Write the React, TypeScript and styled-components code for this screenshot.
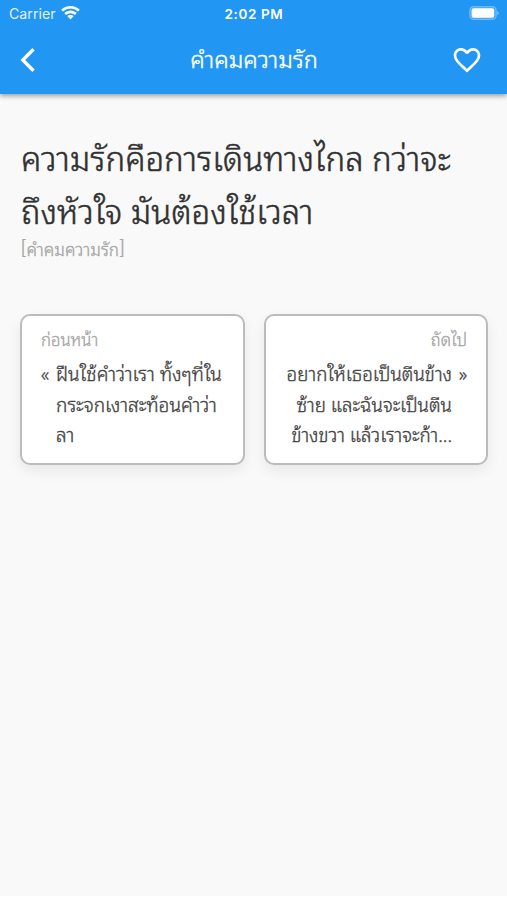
import React from "react";
import styled, { createGlobalStyle } from "styled-components";

const GlobalStyle = createGlobalStyle`
  * { box-sizing: border-box; }
  body { margin: 0; background: #fff; }
`;

const Screen = styled.div`
  width: 100%;
  max-width: 507px;
  height: 900px;
  padding-bottom: 4px;
  display: flex;
  flex-direction: column;
  font-family: "Noto Sans Thai Looped", Sarabun, "Liberation Sans", sans-serif;
  font-weight: 300;
  color: #333;
  overflow: hidden;
`;

const Header = styled.header`
  flex: none;
  height: 94px;
  background: #2196f3;
  color: #fff;
  box-shadow: 0 2px 5px rgba(0, 0, 0, 0.38);
  z-index: 1;
`;

const StatusBar = styled.div`
  height: 27px;
  padding: 0 8px 0 9px;
  display: grid;
  grid-template-columns: 1fr auto 1fr;
  align-items: center;
  font-family: Inter, sans-serif;
  font-size: 13.5px;
`;

const Carrier = styled.div`
  display: flex;
  align-items: center;
  gap: 5px;
  font-size: 14.2px;
  font-weight: 400;
  color: #e3f1fd;
`;

const WifiIcon = styled.svg`
  display: block;
  margin-bottom: 1px;
  color: #fff;
`;

const Clock = styled.div`
  font-weight: 600;
  letter-spacing: 0.6px;
`;

const Battery = styled.svg`
  justify-self: end;
  display: block;
  margin-bottom: 1px;
`;

const NavBar = styled.div`
  height: 66px;
  padding: 0 24px 0 20px;
  display: grid;
  grid-template-columns: 49px 1fr 47px;
  align-items: center;
`;

const IconButton = styled.button<{ $end?: boolean }>`
  display: flex;
  justify-content: ${(p) => (p.$end ? "flex-end" : "flex-start")};
  padding: 0;
  border: 0;
  background: none;
  color: inherit;
`;

const NavTitle = styled.h1`
  margin: 0 0 7px;
  padding-left: 3px;
  text-align: center;
  font-size: 23.6px;
  font-weight: 300;
  line-height: 30px;
  white-space: nowrap;
  -webkit-text-stroke: 0.4px currentColor;
`;

const Content = styled.main`
  flex: 1;
  background: #f9f9f9;
  padding: 37px 19px 0 20px;
`;

const Quote = styled.p`
  margin: 0;
  padding-left: 1px;
  font-size: 33px;
  line-height: 52.5px;
  color: #303030;
  white-space: nowrap;
  -webkit-text-stroke: 0.5px currentColor;
`;

const Category = styled.div`
  display: flex;
  gap: 1px;
  height: 24px;
  margin-top: 1px;
  padding-left: 1px;
  line-height: 24px;
  font-size: 17.1px;
  color: #a4a4a4;
  -webkit-text-stroke: 0.3px currentColor;
`;

const Bracket = styled.span`
  font-family: Roboto, sans-serif;
  font-size: 18.5px;
  line-height: 22px;
`;

const Cards = styled.div`
  margin-top: 53px;
  display: grid;
  grid-template-columns: repeat(2, minmax(0, 1fr));
  gap: 19px;
`;

const Card = styled.article<{ $end?: boolean }>`
  height: 151px;
  padding: ${(p) => (p.$end ? "11px 19px 0 20px" : "11px 19px 0 19px")};
  border: 2px solid #bcbcbc;
  border-radius: 10px;
  background: #fff;
  box-shadow: 0 6px 14px rgba(0, 0, 0, 0.07);
  text-align: ${(p) => (p.$end ? "right" : "left")};
`;

const CardLabel = styled.div`
  height: 24px;
  line-height: 24px;
  font-size: 16.7px;
  color: #a4a4a4;
  -webkit-text-stroke: 0.3px currentColor;
`;

const CardBody = styled.div<{ $end?: boolean }>`
  margin-top: 7px;
  display: flex;
  justify-content: ${(p) => (p.$end ? "flex-end" : "flex-start")};
  gap: 6px;
  font-size: ${(p) => (p.$end ? "18.8px" : "19.1px")};
  line-height: 30.5px;
  color: #444;
  white-space: nowrap;
  -webkit-text-stroke: 0.35px currentColor;
`;

const Mark = styled.span`
  flex: none;
  width: 9px;
  font-size: 18px;
`;

export default function App() {
  return (
    <>
      <GlobalStyle />
      <Screen>
        <Header>
          <StatusBar>
            <Carrier>
              Carrier
              <WifiIcon width="19" height="14" viewBox="0 0 19 14" fill="currentColor">
                <path d="M9.5 0C13.1 0 16.4 1.4 18.8 3.7L17 5.6A10.8 10.8 0 0 0 2 5.6L.2 3.7A13.4 13.4 0 0 1 9.5 0Z" />
                <path d="M9.5 4.5c2.4 0 4.6.9 6.3 2.5l-2 2.1a6.2 6.2 0 0 0-8.6 0L3.2 7a9 9 0 0 1 6.3-2.5Z" />
                <path d="M9.5 8.9c1.3 0 2.4.5 3.2 1.2L9.5 13.6l-3.2-3.5c.8-.7 1.9-1.2 3.2-1.2Z" />
              </WifiIcon>
            </Carrier>
            <Clock>2:02 PM</Clock>
            <Battery width="30" height="14" viewBox="0 0 30 14">
              <rect x=".8" y=".6" width="26.4" height="12.8" rx="3.8" fill="#fff" fillOpacity=".15" stroke="#fff" strokeOpacity=".3" strokeWidth="1.2" />
              <rect x="2.6" y="2.3" width="22.6" height="9.4" rx="2" fill="#fff" />
              <path d="M28.2 5c1.9.5 1.9 3.5 0 4Z" fill="#fff" fillOpacity=".45" />
            </Battery>
          </StatusBar>
          <NavBar>
            <IconButton aria-label="Back">
              <svg width="16" height="24" viewBox="0 0 16 24" fill="none" stroke="currentColor" strokeWidth="3.4">
                <path d="M13.5 1.2 2.8 12l10.7 10.8" />
              </svg>
            </IconButton>
            <NavTitle>คำคมความรัก</NavTitle>
            <IconButton $end aria-label="Favorite">
              <svg width="32" height="32" viewBox="0 0 24 24" fill="currentColor">
                <path d="M16.5 3c-1.74 0-3.41.81-4.5 2.09C10.91 3.81 9.24 3 7.5 3 4.42 3 2 5.42 2 8.5c0 3.78 3.4 6.86 8.55 11.54L12 21.35l1.45-1.32C18.6 15.36 22 12.28 22 8.5 22 5.42 19.58 3 16.5 3zm-4.4 15.55-.1.1-.1-.1C7.14 14.24 4 11.39 4 8.5 4 6.5 5.5 5 7.5 5c1.54 0 3.04.99 3.57 2.36h1.87C13.46 5.99 14.96 5 16.5 5c2 0 3.5 1.5 3.5 3.5 0 2.89-3.14 5.74-7.9 10.05z" />
              </svg>
            </IconButton>
          </NavBar>
        </Header>
        <Content>
          <Quote>
            ความรักคือการเดินทางไกล กว่าจะ
            <br />
            ถึงหัวใจ มันต้องใช้เวลา
          </Quote>
          <Category>
            <Bracket>[</Bracket>คำคมความรัก<Bracket>]</Bracket>
          </Category>
          <Cards>
            <Card>
              <CardLabel>ก่อนหน้า</CardLabel>
              <CardBody>
                <Mark>«</Mark>
                <div>
                  ฝืนใช้คำว่าเรา ทั้งๆที่ใน
                  <br />
                  กระจกเงาสะท้อนคำว่า
                  <br />
                  ลา
                </div>
              </CardBody>
            </Card>
            <Card $end>
              <CardLabel>ถัดไป</CardLabel>
              <CardBody $end>
                <div>
                  อยากให้เธอเป็นตีนข้าง
                  <br />
                  ซ้าย และฉันจะเป็นตีน
                  <br />
                  ข้างขวา แล้วเราจะก้า...
                </div>
                <Mark>»</Mark>
              </CardBody>
            </Card>
          </Cards>
        </Content>
      </Screen>
    </>
  );
}
